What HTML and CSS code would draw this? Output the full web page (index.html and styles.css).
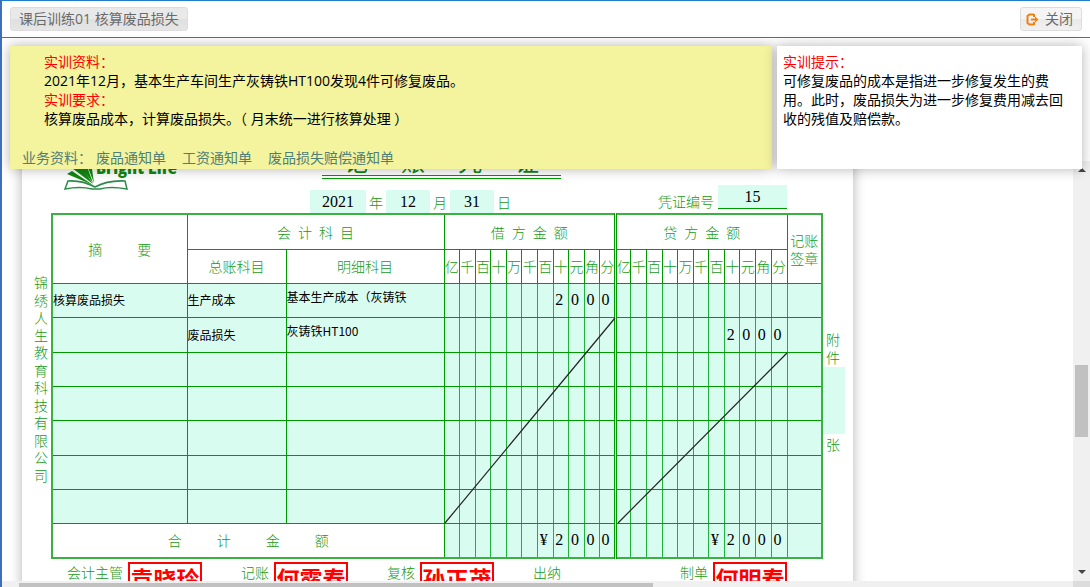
FILE: index.html
```html
<!DOCTYPE html>
<html lang="zh-CN">
<head>
  <meta charset="UTF-8">
  <meta name="viewport" content="width=device-width, initial-scale=1.0">
  <title>核算废品损失</title>
  <link rel="stylesheet" href="styles.css">
</head>
<body>
  <header class="topbar">
    <button class="btn btn-title" type="button">课后训练01 核算废品损失</button>
    <button class="btn btn-close" type="button">
      <svg width="13" height="13" viewBox="0 0 13 13" fill="none" stroke="#f08010" stroke-width="2">
        <path d="M8 1.5H3.500L1.500 3V10L3.500 11.500H8M8 1V4M8 9V12"/>
        <path d="M5 6.500H10" />
        <path d="M9 3.500L12.500 6.500L9 9.500Z" fill="#f08010" stroke="none"/>
      </svg>
      关闭
    </button>
  </header>

  <section class="panels">
    <div class="panel task">
      <div class="task-text">
        <p class="red">实训资料：</p>
        <p>2021年12月，基本生产车间生产灰铸铁HT100发现4件可修复废品。</p>
        <p class="red">实训要求：</p>
        <p>核算废品成本，计算废品损失。（ 月末统一进行核算处理 ）</p>
      </div>
      <nav class="links">
        <span>业务资料：</span>
        <a href="#">废品通知单</a>
        <a href="#">工资通知单</a>
        <a href="#">废品损失赔偿通知单</a>
      </nav>
    </div>
    <div class="panel hint">
      <p class="red">实训提示：</p>
      <p>可修复废品的成本是指进一步修复发生的费用。此时，废品损失为进一步修复费用减去回收的残值及赔偿款。</p>
    </div>
  </section>

  <main class="workspace">
    <div class="canvas">
      <div class="paper">
        <div class="paper-head">
          <svg class="logo" width="114" height="48" viewBox="0 0 114 48">
            <g fill="#118811">
              <path d="M29 54L3 43L8 40Z"/>
              <path d="M29 53L8 37L14 31Z"/>
              <path d="M29 52L14 33L20 27Z"/>
              <path d="M30 52L21 29L26 24Z"/>
            </g>
            <path d="M1 58L4 50Q18 49 31 56Q44 49 61 50L63 58Q46 55 36 58H28Q16 55 1 58Z" fill="#fff" stroke="#2c8a4a" stroke-width="1.500"/>
            <text class="logo-text" x="32" y="43">Bright Life</text>
          </svg>
          <h1 class="title"><span>记</span><span>账</span><span>凭</span><span>证</span></h1>
        </div>

        <div class="meta">
          <input class="field year" id="year" type="text" value="2021"><label for="year">年</label>
          <input class="field" id="month" type="text" value="12"><label for="month">月</label>
          <input class="field" id="day" type="text" value="31"><label for="day">日</label>
          <div class="number">
            <label for="no">凭证编号</label>
            <input class="field no" id="no" type="text" value="15">
          </div>
        </div>

        <div class="voucher">
          <div class="company"><span>锦</span><span>绣</span><span>人</span><span>生</span><span>教</span><span>育</span><span>科</span><span>技</span><span>有</span><span>限</span><span>公</span><span>司</span></div>
          <div class="table-wrap">
            <table class="ledger">
              <colgroup>
                <col class="c-summary"><col class="c-general"><col class="c-detail">
                <col span="22">
                <col class="c-sign">
              </colgroup>
              <thead>
                <tr>
                  <th rowspan="2">摘&emsp;&emsp;&ensp;要</th>
                  <th colspan="2">会&ensp;计&ensp;科&ensp;目</th>
                  <th colspan="11" class="split">借&ensp;方&ensp;金&ensp;额</th>
                  <th colspan="11">贷&ensp;方&ensp;金&ensp;额</th>
                  <th rowspan="2">记账签章</th>
                </tr>
                <tr id="units">
                  <th>总账科目</th>
                  <th>明细科目</th>
                </tr>
              </thead>
              <tbody id="rows"></tbody>
              <tfoot>
                <tr id="total">
                  <th colspan="3">合&emsp;&emsp;&ensp;计&emsp;&emsp;&ensp;金&emsp;&emsp;&ensp;额</th>
                </tr>
              </tfoot>
            </table>
            <svg class="strike" viewBox="0 0 772 346" stroke="#222" stroke-width="1.200">
              <line x1="394" y1="310" x2="564" y2="105"/>
              <line x1="567" y1="310" x2="736" y2="140"/>
            </svg>
          </div>
          <div class="attach">
            <label for="attach">附件</label>
            <input class="field" id="attach" type="text">
            <span>张</span>
          </div>
        </div>

        <div class="signs">
          <div class="sign">会计主管<b class="stamp">袁晓玲</b></div>
          <div class="sign">记账<b class="stamp">何露春</b></div>
          <div class="sign">复核<b class="stamp">孙正茂</b></div>
          <div class="sign cashier">出纳</div>
          <div class="sign">制单<b class="stamp">何明春</b></div>
        </div>
      </div>
    </div>
    <div class="vbar">
      <i class="arrow up"></i>
      <i class="thumb"></i>
      <i class="arrow down"></i>
    </div>
  </main>
  <div class="hbar"><i class="thumb"></i></div>

  <script src="script.js"></script>
</body>
</html>
```

FILE: styles.css
```css
* {
  box-sizing: border-box;
}

body {
  display: flex;
  flex-direction: column;
  height: 100vh;
  margin: 0;
  border-top: 1px solid #1f7fc9;
  border-left: 2px solid #3f6fb8;
  overflow: hidden;
  font-family: "Open Sans", "Noto Sans CJK SC", sans-serif;
  font-size: 14px;
  line-height: 19px;
  color: #000;
  background: #fff;
}

p {
  margin: 0;
}

.topbar {
  display: flex;
  justify-content: space-between;
  align-items: center;
  height: 37px;
  padding: 0 8px;
  border-bottom: 1px solid #1f7fc9;
}

.btn {
  display: flex;
  align-items: center;
  height: 24px;
  padding: 0 8px;
  border: 1px solid #ddd;
  border-radius: 3px;
  font-family: inherit;
  font-size: 14px;
  line-height: 20px;
  color: #6a6a6a;
  background: linear-gradient(#f5f5f5 50%, #eaeaea 50%, #f0f0f0);
}

.btn-title {
  background: linear-gradient(#e9e9e9 50%, #e0e0e0 50%, #e5e5e5);
}

.btn-close {
  gap: 6px;
  padding: 0 8px 0 5px;
}

/* task and hint panels lie over the top of the scrolled voucher */
.panels {
  position: relative;
  z-index: 1;
  display: flex;
  gap: 5px;
  height: 123px;
  margin: 8px 8px 0;
}

.panel {
  padding: 6px;
  box-shadow: 0 0 12px rgba(0, 0, 0, 0.3);
}

.task {
  flex: 1;
  padding-left: 12px;
  background: #f4f39e;
}

.task-text {
  padding-left: 22px;
}

.hint {
  width: 305px;
  padding-right: 12px;
  background: #fff;
}

.red {
  color: #f00;
}

.links {
  display: flex;
  gap: 16px;
  margin-top: 20px;
  color: #4f8078;
}

.links span {
  margin-right: -12px;
}

.links a {
  color: inherit;
  text-decoration: none;
}

.workspace {
  display: flex;
  flex: 1;
  min-height: 0;
  margin-top: -8px;
}

.canvas {
  flex: 1;
  overflow: hidden;
}

.paper {
  width: 831px;
  height: 800px;
  margin: -30px 0 0 20px;
  box-shadow: 0 0 12px rgba(0, 0, 0, 0.3);
  color: #159a15;
  background: #fff;
  font-weight: 300;
  font-family: "Noto Sans CJK SC", sans-serif;
}

.paper-head {
  display: flex;
  height: 48px;
  padding-left: 42px;
}

.logo {
  overflow: visible;
}

.logo-text {
  font: 800 15px "Open Sans", sans-serif;
  fill: #118811;
}

.title {
  display: flex;
  justify-content: space-between;
  width: 239px;
  height: 48px;
  margin: 0 0 0 144px;
  padding: 16px 22px 0;
  border-bottom: 4px double #090;
  font-size: 24px;
  font-weight: 400;
  line-height: 28px;
  color: #118811;
}

.meta {
  display: flex;
  align-items: flex-end;
  gap: 3px;
  height: 34px;
  padding: 0 66px 0 288px;
  line-height: 22px;
}

.field {
  width: 44px;
  height: 23px;
  padding: 0;
  border: 0;
  font: 16px "Liberation Serif", serif;
  text-align: center;
  color: #000;
  background: #d9fcf0;
}

.year {
  width: 56px;
}

.number {
  display: flex;
  gap: 4px;
  align-items: flex-end;
  margin: 0 0 4px auto;
  line-height: 16px;
}

.no {
  width: 69px;
  height: 24px;
  border-bottom: 1px solid #090;
}

.voucher {
  display: flex;
}

.company {
  display: flex;
  flex-direction: column;
  justify-content: space-between;
  flex-shrink: 0;
  width: 14px;
  height: 210px;
  margin: 61px 3px 0 12px;
  line-height: 17px;
}

.table-wrap {
  position: relative;
  width: 772px;
}

.ledger {
  width: 100%;
  border: 2px solid #3cb043;
  border-collapse: collapse;
  table-layout: fixed;
  line-height: 18px;
}

.c-summary {
  width: 135px;
}

.c-general {
  width: 99px;
}

.c-detail {
  width: 158px;
}

.c-sign {
  width: 35px;
}

.ledger tr,
.ledger tbody tr:nth-child(3n+1) {
  height: 34px;
}

.ledger thead tr:first-child,
.ledger tbody tr:nth-child(3n+2),
.ledger tfoot tr {
  height: 35px;
}

.ledger th,
.ledger td {
  padding: 0;
  border: 1px solid #090;
  font-weight: 300;
}

.ledger td {
  color: #000;
  background: #d9fcf0;
  font-size: 12px;
  font-weight: 400;
}

.ledger .detail {
  padding-top: 4px;
  vertical-align: top;
}

.ledger .digit {
  padding-right: 3px;
  border-left-color: #22b03c;
  border-right-color: #22b03c;
  font-family: "Liberation Serif", serif;
  font-size: 16px;
  text-align: center;
}

.ledger .split {
  border-right: 3px double #090;
}

.strike {
  position: absolute;
  top: 0;
  left: 0;
  width: 100%;
}

.attach {
  display: flex;
  flex-direction: column;
  gap: 1px;
  width: 22px;
  padding-top: 117px;
  line-height: 18px;
}

.attach label,
.attach span {
  width: 14px;
  margin-left: 3px;
}

.attach .field {
  width: 22px;
  height: 67px;
}

.signs {
  display: flex;
  gap: 39px;
  margin: 3px 0 0 45px;
  line-height: 20px;
}

.sign {
  display: flex;
  gap: 5px;
}

.cashier {
  width: 108px;
}

.stamp {
  width: 74px;
  border: 2px solid #f00;
  font-size: 23px;
  font-weight: 700;
  line-height: 28px;
  text-align: center;
  color: #f00;
}

.vbar {
  display: flex;
  flex-direction: column;
  align-items: center;
  width: 17px;
  padding: 7px 0;
  background: #f0f0f0;
}

.vbar .thumb {
  width: 13px;
  height: 72px;
  margin: 193px 0 auto;
  background: #c1c1c1;
}

.arrow {
  border: 4px solid transparent;
}

.up {
  border-top: 0;
  border-bottom-color: #444;
}

.down {
  border-bottom: 0;
  border-top-color: #444;
}

.hbar {
  display: flex;
  height: 6px;
  padding: 2px 0 0 17px;
  background: linear-gradient(to left, #dcdcdc 17px, #f0f0f0 17px);
}

.hbar .thumb {
  width: 634px;
  background: #c1c1c1;
}
```

FILE: script.js
```js
var units = ['亿', '千', '百', '十', '万', '千', '百', '十', '元', '角', '分'];

var entries = [
  { summary: '核算废品损失', general: '生产成本', detail: '基本生产成本（灰铸铁', debit: '2000', credit: '' },
  { summary: '', general: '废品损失', detail: '灰铸铁HT100', debit: '', credit: '2000' }
];

function addCell(row, tag, text, className) {
  var cell = document.createElement(tag);
  cell.textContent = text;
  if (className) cell.className = className;
  row.appendChild(cell);
}

// amounts are right aligned over the eleven digit columns
function addAmount(row, amount, isDebit) {
  var digits = amount.padStart(11, ' ');
  for (var i = 0; i < 11; i++) {
    addCell(row, 'td', digits[i].trim(), isDebit && i === 10 ? 'digit split' : 'digit');
  }
}

var unitRow = document.getElementById('units');
for (var side = 0; side < 2; side++) {
  units.forEach(function (unit, i) {
    addCell(unitRow, 'th', unit, side === 0 && i === 10 ? 'split' : '');
  });
}

var body = document.getElementById('rows');
for (var r = 0; r < 7; r++) {
  var entry = entries[r] || { summary: '', general: '', detail: '', debit: '', credit: '' };
  var row = document.createElement('tr');
  addCell(row, 'td', entry.summary);
  addCell(row, 'td', entry.general);
  addCell(row, 'td', entry.detail, 'detail');
  addAmount(row, entry.debit, true);
  addAmount(row, entry.credit, false);
  addCell(row, 'td', '');
  body.appendChild(row);
}

var total = document.getElementById('total');
addAmount(total, '¥2000', true);
addAmount(total, '¥2000', false);
addCell(total, 'td', '');
```
